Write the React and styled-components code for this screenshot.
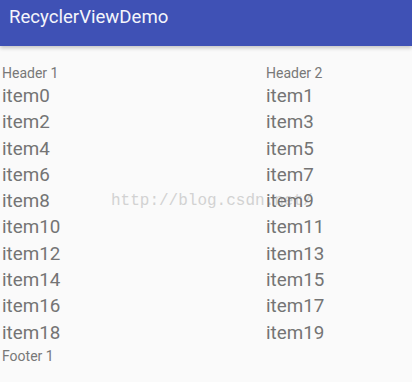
import React from "react";
import styled, { createGlobalStyle } from "styled-components";

const GlobalStyle = createGlobalStyle`
  html, body {
    margin: 0;
    padding: 0;
    background: #fafafa;
  }
  body {
    font-family: Roboto, "Noto Sans", sans-serif;
  }
`;

const Screen = styled.div`
  position: relative;
  width: 412px;
  height: 382px;
  overflow: hidden;
  background: #fafafa;
`;

const Toolbar = styled.div`
  height: 46px;
  background: #3f51b5;
  box-shadow: 0 2px 4px rgba(0, 0, 0, 0.22);
  display: flex;
  align-items: flex-start;
  padding: 6px 0 0 9px;
  box-sizing: border-box;
  position: relative;
  z-index: 2;
`;

const Title = styled.h1`
  margin: 0;
  font-size: 18.6px;
  font-weight: 400;
  line-height: 22px;
  color: #f4f5fb;
`;

const Grid = styled.div`
  position: relative;
  z-index: 1;
  display: grid;
  grid-template-columns: 264px 1fr;
  padding: 17px 0 0 2px;
`;

const Header = styled.div`
  font-size: 14px;
  line-height: 20px;
  color: #787878;
  grid-column: ${(p) => (p.$full ? "1 / -1" : "auto")};
`;

const Item = styled.div`
  font-size: 18.8px;
  line-height: 26.3px;
  color: #747474;
`;

const Watermark = styled.div`
  position: absolute;
  left: 111px;
  top: 191px;
  font-family: "Liberation Mono", monospace;
  font-size: 16px;
  line-height: 20px;
  color: #d2d2d2;
  z-index: 0;
  white-space: pre;
`;

const items = Array.from({ length: 20 }, (_, i) => `item${i}`);

export default function App() {
  return (
    <Screen>
      <GlobalStyle />
      <Toolbar>
        <Title>RecyclerViewDemo</Title>
      </Toolbar>
      <Watermark>http://blog.csdn.net/</Watermark>
      <Grid>
        <Header>Header 1</Header>
        <Header>Header 2</Header>
        {items.map((it) => (
          <Item key={it}>{it}</Item>
        ))}
        <Header $full>Footer 1</Header>
      </Grid>
    </Screen>
  );
}
